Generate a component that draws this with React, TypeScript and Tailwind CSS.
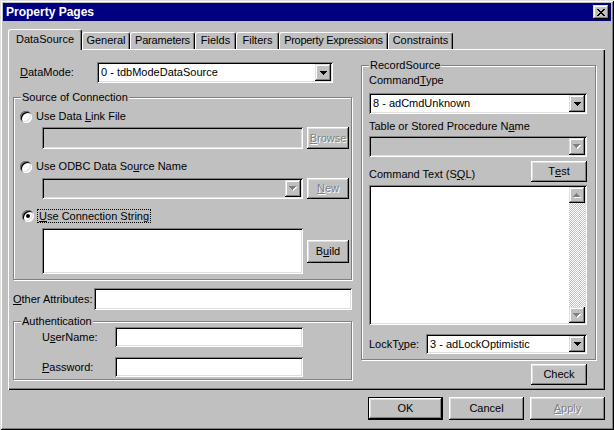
import React from "react";

const raised =
  "bg-[#c0c0c0] shadow-[inset_-1px_-1px_#000,inset_1px_1px_#fff,inset_-2px_-2px_#808080,inset_2px_2px_#dfdfdf]";
const sunken =
  "shadow-[inset_1px_1px_#808080,inset_-1px_-1px_#fff,inset_2px_2px_#000,inset_-2px_-2px_#dfdfdf]";
const smallBtn =
  "bg-[#c0c0c0] shadow-[inset_-1px_-1px_#000,inset_1px_1px_#dfdfdf,inset_-2px_-2px_#808080,inset_2px_2px_#fff]";
const disabledText = "text-[#808080] [text-shadow:1px_1px_0_#fff]";

function Tri({ up = false, disabled = false }: { up?: boolean; disabled?: boolean }) {
  const rows = [0, 1, 2, 3].map((i) => {
    const y = up ? 3 - i : i;
    return <rect key={i} x={i} y={y} width={7 - 2 * i} height={1} />;
  });
  if (disabled) {
    return (
      <svg width="8" height="5" viewBox="0 0 8 5" shapeRendering="crispEdges">
        <g fill="#fff" transform="translate(1,1)">{rows}</g>
        <g fill="#808080">{rows}</g>
      </svg>
    );
  }
  return (
    <svg width="7" height="4" viewBox="0 0 7 4" shapeRendering="crispEdges">
      <g fill="#000">{rows}</g>
    </svg>
  );
}

function CloseX() {
  const px: [number, number, number][] = [
    [0, 0, 2], [6, 0, 2],
    [1, 1, 2], [5, 1, 2],
    [2, 2, 4],
    [3, 3, 2],
    [2, 4, 4],
    [1, 5, 2], [5, 5, 2],
    [0, 6, 2], [6, 6, 2],
  ];
  return (
    <svg width="8" height="7" viewBox="0 0 8 7" shapeRendering="crispEdges">
      {px.map(([x, y, w], i) => (
        <rect key={i} x={x} y={y} width={w} height={1} fill="#000" />
      ))}
    </svg>
  );
}

function Btn({
  children,
  className = "",
  disabled = false,
  def = false,
}: {
  children: React.ReactNode;
  className?: string;
  disabled?: boolean;
  def?: boolean;
}) {
  if (def) {
    return (
      <div className={`border border-black ${className}`}>
        <div className={`w-full h-full flex items-center justify-center ${raised}`}>{children}</div>
      </div>
    );
  }
  return (
    <div
      className={`flex items-center justify-center ${raised} ${disabled ? disabledText : ""} ${className}`}
    >
      {children}
    </div>
  );
}

function Combo({
  value = "",
  className = "",
  disabled = false,
}: {
  value?: string;
  className?: string;
  disabled?: boolean;
}) {
  return (
    <div className={`flex p-[2px] ${sunken} ${disabled ? "bg-[#c0c0c0]" : "bg-white"} ${className}`}>
      <div className="flex-1 flex items-center pl-[2px] whitespace-nowrap overflow-hidden">{value}</div>
      <div className={`w-[16px] flex items-center justify-center ${smallBtn}`}>
        <Tri disabled={disabled} />
      </div>
    </div>
  );
}

function Field({ className = "", disabled = false }: { className?: string; disabled?: boolean }) {
  return <div className={`${sunken} ${disabled ? "bg-[#c0c0c0]" : "bg-white"} ${className}`} />;
}

function Radio({ checked = false, className = "" }: { checked?: boolean; className?: string }) {
  return (
    <div
      className={`w-[12px] h-[12px] rounded-full bg-white flex items-center justify-center shrink-0 shadow-[inset_1px_1px_#808080,inset_-1px_-1px_#fff,inset_2px_2px_#000,inset_-2px_-2px_#dfdfdf] ${className}`}
    >
      {checked && <div className="w-[4px] h-[4px] rounded-full bg-black" />}
    </div>
  );
}

function Group({
  title,
  className = "",
  children,
}: {
  title: string;
  className?: string;
  children?: React.ReactNode;
}) {
  return (
    <div
      className={`relative border border-[#808080] shadow-[inset_1px_1px_#fff,1px_1px_#fff] ${className}`}
    >
      <span className="absolute left-[7px] -top-[7px] px-[1px] bg-[#c0c0c0] leading-[13px] whitespace-nowrap">
        {title}
      </span>
      {children}
    </div>
  );
}

function U({ children }: { children: React.ReactNode }) {
  return <u className="underline underline-offset-[1px] decoration-1">{children}</u>;
}

function Tab({ label, className = "" }: { label: string; className?: string }) {
  return (
    <div
      className={`h-[17px] border-l border-t border-white border-r border-r-black rounded-t-[3px] shadow-[inset_-1px_0_#808080] flex justify-center pt-[1px] whitespace-nowrap ${className}`}
    >
      {label}
    </div>
  );
}

export default function App() {
  return (
    <div className="w-[614px] h-[430px] bg-[#c0c0c0] p-[3px] flex flex-col text-[11px] leading-[13px] text-black font-['Liberation_Sans',Arial,sans-serif] shadow-[inset_1px_1px_#dfdfdf,inset_-1px_-1px_#000,inset_2px_2px_#fff,inset_-2px_-2px_#808080]">
      {/* Title bar */}
      <div className="h-[18px] bg-[#000080] flex items-center justify-between pl-[3px] pr-[2px]">
        <span className="text-white font-bold text-[12px]">Property Pages</span>
        <div className={`w-[16px] h-[14px] flex items-center justify-center ${smallBtn}`}>
          <CloseX />
        </div>
      </div>

      {/* Body */}
      <div className="flex flex-col pl-[5px] pt-[8px]">
        {/* Tabs */}
        <div className="flex items-end h-[20px]">
          <div className="relative z-10 -mb-[1px] w-[74px] h-[21px] bg-[#c0c0c0] border-l border-t border-white border-r border-r-black rounded-t-[3px] shadow-[inset_-1px_0_#808080] flex justify-center pt-[3px]">
            DataSource
          </div>
          <Tab label="General" className="w-[48px]" />
          <Tab label="Parameters" className="w-[65px] tracking-[-0.2px]" />
          <Tab label="Fields" className="w-[41px]" />
          <Tab label="Filters" className="w-[43px]" />
          <Tab label="Property Expressions" className="w-[109px] tracking-[-0.3px]" />
          <Tab label="Constraints" className="w-[65px]" />
        </div>

        {/* Panel */}
        <div className="w-[597px] h-[341px] flex pl-[5px] shadow-[inset_1px_1px_#fff,inset_-1px_-1px_#000,inset_-2px_-2px_#808080]">
          {/* Left column */}
          <div className="w-[340px] flex flex-col pt-[13px]">
            <div className="flex items-center h-[21px]">
              <div className="w-[84px] pl-[7px]">
                <U>D</U>ataMode:
              </div>
              <Combo value="0 - tdbModeDataSource" className="w-[236px] h-[21px]" />
            </div>

            <Group title="Source of Connection" className="mt-[14px] w-[339px] h-[183px]">
              <div className="flex flex-col pl-[6px] pt-[12px]">
                <div className="flex items-center h-[13px] gap-[4px]">
                  <Radio />
                  <span>
                    Use Data <U>L</U>ink File
                  </span>
                </div>
                <div className="flex mt-[4px] pl-[22px] gap-[4px]">
                  <Field disabled className="w-[261px] h-[22px]" />
                  <Btn disabled className="w-[42px] h-[22px]">
                    <U>B</U>rowse
                  </Btn>
                </div>
                <div className="flex items-center h-[13px] gap-[4px] mt-[11px]">
                  <Radio />
                  <span>
                    Use ODBC Data So<U>u</U>rce Name
                  </span>
                </div>
                <div className="flex mt-[5px] pl-[22px] gap-[4px]">
                  <Combo disabled className="w-[261px] h-[21px]" />
                  <Btn disabled className="w-[42px] h-[21px]">
                    <U>N</U>ew
                  </Btn>
                </div>
                <div className="flex items-center h-[14px] gap-[3px] mt-[10px] pl-[2px]">
                  <Radio checked />
                  <span className="border border-dotted border-black px-[1px] h-[14px] leading-[12px]">
                    <U>U</U>se Connection String
                  </span>
                </div>
                <div className="flex items-center mt-[5px] pl-[22px] gap-[4px]">
                  <Field className="w-[261px] h-[46px]" />
                  <Btn className="w-[42px] h-[23px]">
                    B<U>u</U>ild
                  </Btn>
                </div>
              </div>
            </Group>

            <div className="flex items-center h-[22px] mt-[8px]">
              <div className="w-[81px]">
                <U>O</U>ther Attributes:
              </div>
              <Field className="w-[258px] h-[22px]" />
            </div>

            <Group title="Authentication" className="mt-[11px] w-[339px] h-[59px]">
              <div className="flex flex-col pt-[5px]">
                <div className="flex items-center h-[20px]">
                  <div className="w-[101px] pl-[28px]">
                    U<U>s</U>erName:
                  </div>
                  <Field className="w-[188px] h-[20px]" />
                </div>
                <div className="flex items-center h-[20px] mt-[10px]">
                  <div className="w-[101px] pl-[28px]">
                    <U>P</U>assword:
                  </div>
                  <Field className="w-[188px] h-[20px]" />
                </div>
              </div>
            </Group>
          </div>

          {/* Right column */}
          <div className="w-[236px] ml-[8px] flex flex-col pt-[16px]">
            <Group title="RecordSource" className="w-[235px] h-[295px]">
              <div className="flex flex-col pl-[7px] pt-[8px]">
                <div>
                  Command<U>T</U>ype
                </div>
                <Combo value="8 - adCmdUnknown" className="w-[218px] h-[21px] mt-[6px]" />
                <div className="mt-[6px]">
                  Table or Stored Procedure N<U>a</U>me
                </div>
                <Combo disabled className="w-[218px] h-[21px] mt-[3px]" />
                <div className="flex w-[218px] justify-between items-start mt-[4px]">
                  <div className="mt-[7px]">
                    Command Text (S<U>Q</U>L)
                  </div>
                  <Btn className="w-[56px] h-[21px]">
                    T<U>e</U>st
                  </Btn>
                </div>
                <div className={`w-[218px] h-[140px] mt-[3px] bg-white p-[2px] flex justify-end ${sunken}`}>
                  <div className="w-[16px] flex flex-col">
                    <div className={`h-[16px] flex items-center justify-center ${smallBtn}`}>
                      <Tri up disabled />
                    </div>
                    <div className="flex-1 bg-[image:repeating-conic-gradient(#c0c0c0_0%_25%,#ffffff_0%_50%)] bg-size-[2px_2px]" />
                    <div className={`h-[16px] flex items-center justify-center ${smallBtn}`}>
                      <Tri disabled />
                    </div>
                  </div>
                </div>
                <div className="flex items-center mt-[9px] w-[218px]">
                  <div className="w-[57px]">
                    LockT<U>y</U>pe:
                  </div>
                  <Combo value="3 - adLockOptimistic" className="w-[161px] h-[20px]" />
                </div>
              </div>
            </Group>
            <div className="flex justify-end pr-[10px] mt-[4px]">
              <Btn className="w-[56px] h-[21px]">Check</Btn>
            </div>
          </div>
        </div>

        {/* Bottom buttons */}
        <div className="w-[597px] flex justify-end gap-[6px] mt-[7px]">
          <Btn def className="w-[75px] h-[23px]">
            OK
          </Btn>
          <Btn className="w-[75px] h-[23px]">Cancel</Btn>
          <Btn disabled className="w-[75px] h-[23px]">
            <U>A</U>pply
          </Btn>
        </div>
      </div>
    </div>
  );
}
